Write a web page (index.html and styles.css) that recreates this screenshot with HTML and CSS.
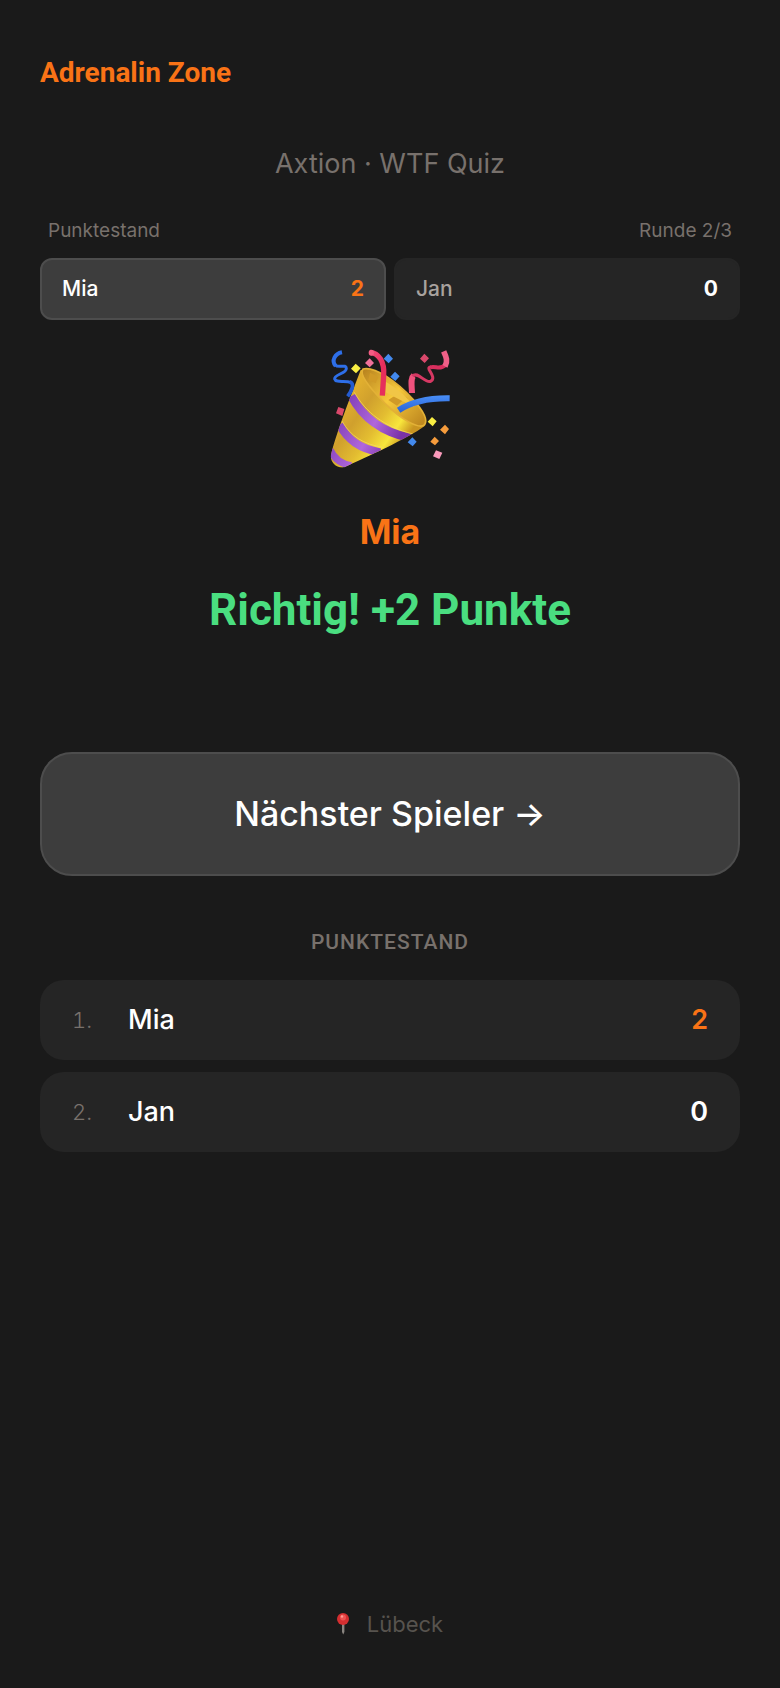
FILE: index.html
```html
<!DOCTYPE html>
<html lang="de">
<head>
<meta charset="utf-8">
<meta name="viewport" content="width=device-width, initial-scale=1">
<title>Adrenalin Zone</title>
<link rel="stylesheet" href="styles.css">
</head>
<body>
<div class="app">
  <header class="header">
    <a class="logo" href="#">Adrenalin Zone</a>
  </header>

  <main class="main">
    <p class="subtitle">Axtion · WTF Quiz</p>

    <div class="status">
      <span>Punktestand</span>
      <span>Runde 2/3</span>
    </div>
    <div class="players">
      <div class="player active"><span>Mia</span><b>2</b></div>
      <div class="player"><span>Jan</span><b>0</b></div>
    </div>

    <section class="result">
      <svg class="popper" viewBox="0 0 420 420" aria-hidden="true">
        <defs>
          <linearGradient id="gold" x1="70" y1="200" x2="240" y2="320" gradientUnits="userSpaceOnUse">
            <stop offset="0" stop-color="#e0ae2e"/>
            <stop offset=".25" stop-color="#d0a02d"/>
            <stop offset=".55" stop-color="#e3bd31"/>
            <stop offset=".8" stop-color="#f8e63c"/>
            <stop offset="1" stop-color="#c99420"/>
          </linearGradient>
          <linearGradient id="purple" x1="60" y1="220" x2="230" y2="310" gradientUnits="userSpaceOnUse">
            <stop offset="0" stop-color="#8240b8"/>
            <stop offset=".55" stop-color="#b067dc"/>
            <stop offset="1" stop-color="#7a32a8"/>
          </linearGradient>
          <linearGradient id="mouth" x1="130" y1="90" x2="300" y2="250" gradientUnits="userSpaceOnUse">
            <stop offset="0" stop-color="#b8831f"/>
            <stop offset=".5" stop-color="#f6c93b"/>
            <stop offset="1" stop-color="#c08a20"/>
          </linearGradient>
          <linearGradient id="red" x1="150" y1="30" x2="200" y2="60" gradientUnits="userSpaceOnUse">
            <stop offset="0" stop-color="#f0507c"/>
            <stop offset="1" stop-color="#e62e5c"/>
          </linearGradient>
          <linearGradient id="blue" x1="0" y1="165" x2="0" y2="215" gradientUnits="userSpaceOnUse">
            <stop offset="0" stop-color="#4a90f8"/>
            <stop offset="1" stop-color="#2a63d6"/>
          </linearGradient>
          <clipPath id="cone">
            <path d="M122 90C108 128 52 268 33 344C29 362 46 386 73 382C140 350 260 298 314 258C326 234 200 80 122 90Z"/>
          </clipPath>
        </defs>
        <g clip-path="url(#cone)">
          <path fill="url(#gold)" d="M0 60H340V420H0Z"/>
          <path fill="none" stroke="url(#purple)" stroke-width="25" d="M94 168C125 227 181 275 270 294"/>
          <path fill="none" stroke="url(#purple)" stroke-width="24" d="M58 254C83 300 119 326 181 337"/>
          <path fill="none" stroke="url(#purple)" stroke-width="21" d="M30 329C42 355 60 371 94 377"/>
          <path fill="none" stroke="#f8d968" stroke-width="2" d="M103 157C138 217 190 259 279 282M66 243C91 288 130 313 190 322"/>
        </g>
        <path fill="url(#mouth)" stroke="#e3b136" stroke-width="5" d="M129 87C165 78 231 126 279 178C307 209 324 239 314 254C298 270 242 237 195 190C151 146 116 103 129 87Z"/>
        <path fill="#d09a27" d="M150 98l25 13-8 18-22-8zM205 180l22-14 22 15-18 16zM248 166l15 9-10 7z"/>
        <path fill="#f1c646" d="M198 126C235 146 269 180 282 201L225 172L197 157Z"/>
        <path fill="none" stroke="url(#red)" stroke-width="16" d="M150 37C176 39 194 65 191 106L187 167"/>
        <ellipse cx="154" cy="38" rx="8" ry="9" fill="#f25d83"/>
        <path fill="none" stroke="url(#blue)" stroke-width="18" d="M236 211C273 186 319 174 389 175"/>
        <path fill="none" stroke="#2e6fe8" stroke-width="12" d="M66 37C45 41 33 62 47 78"/>
        <path fill="none" stroke="#2e6fe8" stroke-width="9" d="M45 74C56 87 78 70 79 85C80 101 41 103 44 117C48 130 76 120 92 127"/>
        <path fill="none" stroke="#245bd0" stroke-width="11" d="M89 125C105 131 96 151 83 169"/>
        <path fill="none" stroke="#ef527d" stroke-width="18" d="M276 159C275 134 271 115 281 107"/>
        <path fill="none" stroke="#d63863" stroke-width="9" d="M277 108C294 92 314 131 332 124C354 111 311 82 333 81"/>
        <path fill="none" stroke="#d92f5e" stroke-width="12" d="M331 82C347 77 360 91 376 75"/>
        <path fill="none" stroke="#f06088" stroke-width="17" d="M375 79C384 64 379 51 371 34"/>
        <path fill="#4389ed" d="M205 41l14 15-13 14-15-14zM225 95l14 14-13 14-15-13zM277 292l13 13-12 14-15-12z"/>
        <path fill="#f9ee43" d="M107 71l15 14-14 15-15-14zM336 231l14 13-12 15-15-14z"/>
        <path fill="#f0719b" d="M149 55l13 14-13 13-14-13z"/>
        <path fill="#d9486b" d="M313 41l14 14-13 14-14-13zM55 201l18 6-6 21-19-8z"/>
        <path fill="#f69c3c" d="M375 254l12 13-12 16-15-14zM344 290l13 13-12 13-14-11z"/>
        <path fill="#f99abb" d="M348 331l19 7-9 19-19-8z"/>
      </svg>
      <p class="result-name">Mia</p>
      <h1 class="result-text">Richtig! +2 Punkte</h1>
    </section>

    <button class="next" type="button">Nächster Spieler →</button>

    <section class="ranking">
      <h2 class="ranking-title">Punktestand</h2>
      <ol class="ranking-list">
        <li class="row leader"><span class="pos">1.</span><span class="name">Mia</span><b>2</b></li>
        <li class="row"><span class="pos">2.</span><span class="name">Jan</span><b>0</b></li>
      </ol>
    </section>
  </main>

  <footer class="footer">
    <svg class="pin" viewBox="0 0 12 22" aria-hidden="true">
      <path fill="#8a8580" d="M5 10h2.400v9l-1.200 2.500L5 19z"/>
      <circle cx="6" cy="6" r="6" fill="#d42e30"/>
      <circle cx="6" cy="4.500" r="3" fill="#ee5351"/>
      <circle cx="5" cy="3.500" r="1.200" fill="#ff9b94"/>
    </svg>
    <span>Lübeck</span>
  </footer>
</div>
</body>
</html>
```
FILE: styles.css
```css
*{box-sizing:border-box;margin:0;padding:0;}

body{background:#1a1a1a;color:#fff;font-family:Inter,"Noto Sans",sans-serif;}

.app{min-height:100vh;padding:56px 40px 48px;display:flex;flex-direction:column;}
.logo,.result-text,.ranking-title{font-family:Roboto,sans-serif;}
.header{display:flex;}
.logo{color:#f97316;font-size:28px;line-height:34px;font-weight:700;text-decoration:none;}

.main{padding-top:54px;}
.subtitle{color:#78716c;font-size:27px;line-height:40px;text-align:center;}

.status{display:flex;justify-content:space-between;margin-top:32px;padding:0 8px;color:#78716c;font-size:19px;line-height:30px;}
.players{display:grid;grid-template-columns:1fr 1fr;gap:8px;margin-top:12px;}
.player{display:flex;justify-content:space-between;padding:14px 20px;border:2px solid #252525;border-radius:12px;background:#252525;color:#a8a29e;font-size:21px;line-height:30px;font-weight:500;}
.player b{color:#fff;font-weight:700;}
.player.active{background:#3d3d3d;border-color:#4d4d4d;color:#fff;}
.player.active b{color:#f97316;}

.result{display:flex;flex-direction:column;align-items:center;padding-top:20px;text-align:center;}
.popper{width:140px;height:140px;}
.result-name{margin-top:30px;color:#f97316;font-size:34px;line-height:44px;font-weight:700;}
.result-text{margin-top:28px;color:#4ade80;font-size:44px;line-height:56px;font-weight:700;}

.next{display:block;width:100%;margin-top:114px;padding:38px 40px;border:2px solid #4d4d4d;border-radius:32px;background:#3d3d3d;color:#fff;font-family:inherit;font-size:34px;line-height:44px;font-weight:500;cursor:pointer;}

.ranking{margin-top:50px;}
.ranking-title{color:#78716c;font-size:21px;line-height:32px;font-weight:500;letter-spacing:1px;text-align:center;text-transform:uppercase;}
.ranking-list{display:flex;flex-direction:column;gap:12px;margin-top:22px;list-style:none;}
.row{display:flex;align-items:center;padding:20px 32px;border-radius:24px;background:#252525;font-size:27px;line-height:40px;}
.pos{width:56px;color:#78716c;font-size:22px;font-weight:300;font-variant-numeric:tabular-nums;}
.name{flex:1;font-weight:500;}
.row b{font-weight:600;}
.leader b{color:#f97316;}

.footer{display:flex;justify-content:center;align-items:center;gap:18px;margin-top:auto;color:#57534e;font-size:22px;line-height:32px;}
.pin{width:12px;height:22px;}
```
